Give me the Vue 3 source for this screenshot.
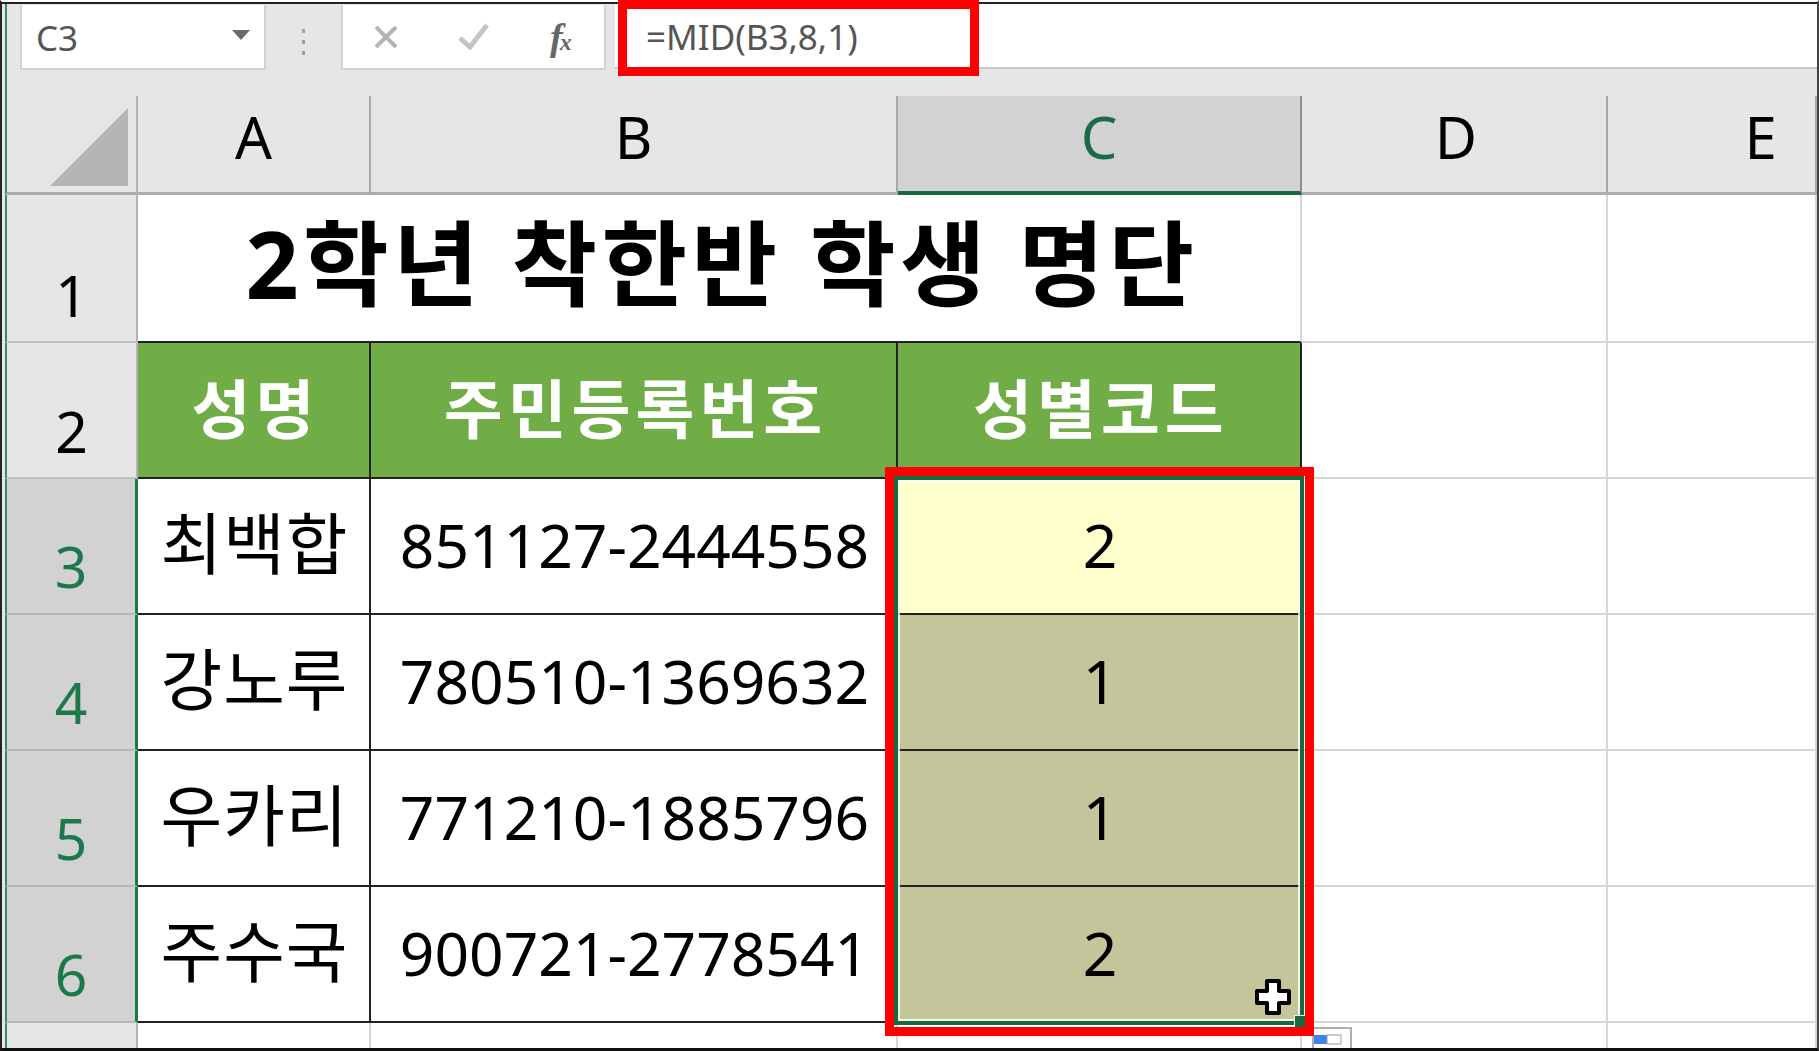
<script setup>
const columns = [
  { label: 'A' },
  { label: 'B' },
  { label: 'C', selected: true },
  { label: 'D' },
  { label: 'E' }
]
const headers = ['성명', '주민등록번호', '성별코드']
const students = [
  { row: 3, name: '최백합', id: '851127-2444558', code: '2', tone: 'active' },
  { row: 4, name: '강노루', id: '780510-1369632', code: '1', tone: 'filled' },
  { row: 5, name: '우카리', id: '771210-1885796', code: '1', tone: 'filled' },
  { row: 6, name: '주수국', id: '900721-2778541', code: '2', tone: 'filled' }
]
</script>

<template>
  <div class="page">
    <div class="top-rule"></div>
    <div class="toolbar">
      <div class="name-box">
        <span class="cell-ref">C3</span>
        <span class="caret"></span>
      </div>
      <div class="dots"><i></i><i></i><i></i></div>
      <div class="fx-box">
        <svg class="fx-icon x" viewBox="0 0 26 22" aria-hidden="true">
          <path d="M3 1 L23 21 M23 1 L3 21" />
        </svg>
        <svg class="fx-icon check" viewBox="0 0 32 27" aria-hidden="true">
          <path d="M2 15 L12 24 L29 2" />
        </svg>
        <span class="fx"><em>f</em><b>x</b></span>
      </div>
      <div class="formula">=MID(B3,8,1)</div>
    </div>

    <div class="sheet">
      <div class="corner"><span class="triangle"></span></div>
      <div
        v-for="col in columns"
        :key="col.label"
        class="col-head"
        :class="['col-' + col.label, { selected: col.selected }]"
      >{{ col.label }}</div>

      <div class="row-head">1</div>
      <div class="title">2학년 착한반 학생 명단</div>
      <div class="blank"></div>
      <div class="blank"></div>

      <div class="row-head">2</div>
      <div
        v-for="h in headers"
        :key="h"
        class="head-cell"
      >{{ h }}</div>
      <div class="blank"></div>
      <div class="blank"></div>

      <template v-for="s in students" :key="s.row">
        <div class="row-head selected">{{ s.row }}</div>
        <div class="data kr">{{ s.name }}</div>
        <div class="data">{{ s.id }}</div>
        <div class="data code" :class="s.tone">{{ s.code }}</div>
        <div class="blank"></div>
        <div class="blank"></div>
      </template>

      <div class="row-head last"></div>
      <div class="tail"></div>
      <div class="tail"></div>
      <div class="tail"></div>
      <div class="tail"></div>
      <div class="tail"></div>
    </div>

    <div class="selection"></div>
    <div class="handle"></div>
    <svg class="cursor" viewBox="0 0 38 38" aria-hidden="true">
      <path d="M13 3 H25 V13 H35 V25 H25 V35 H13 V25 H3 V13 H13 Z" />
    </svg>
    <svg class="paste" viewBox="0 0 40 21" aria-hidden="true">
      <rect class="paste-frame" x="1" y="1" width="38" height="30" />
      <rect class="paste-blue" x="2" y="8" width="13" height="9" />
      <rect class="paste-white" x="15" y="8" width="14" height="9" />
    </svg>
    <div class="mark mark-formula"></div>
    <div class="mark mark-range"></div>
  </div>
</template>

<style>
html, body { margin: 0; background: #fff; }
</style>

<style scoped>
.page {
  position: relative;
  box-sizing: border-box;
  width: 1819px;
  height: 1051px;
  padding-left: 3px;
  border-top: 2px solid #fff;
  border-left: 2px solid #222;
  border-right: 2px solid #444;
  border-bottom: 3px solid #111;
  background: #e6e6e6;
  font-family: "Noto Sans", "Noto Sans CJK KR", sans-serif;
  color: #000;
}
.top-rule {
  height: 2px;
  margin-left: -3px;
  background: #222;
}
.toolbar {
  box-sizing: border-box;
  display: flex;
  align-items: flex-start;
  height: 92px;
  padding: 1px 0 0 13px;
  border-left: 2px solid #3b8a5d;
}
.name-box {
  box-sizing: border-box;
  display: flex;
  align-items: center;
  justify-content: space-between;
  width: 246px;
  height: 65px;
  padding: 2px 14px 0 14px;
  background: #fff;
  border: 2px solid #d2d2d2;
  border-top: 0;
}
.cell-ref, .formula {
  font-size: 35px;
  line-height: 1;
  color: #555;
}
.caret {
  width: 0;
  height: 0;
  border-left: 9px solid transparent;
  border-right: 9px solid transparent;
  border-top: 10px solid #6a6a6a;
  margin-bottom: 6px;
}
.dots {
  display: flex;
  flex-direction: column;
  gap: 7px;
  width: 75px;
  height: 65px;
  padding: 24px 0 0 36px;
  box-sizing: border-box;
}
.dots i {
  width: 3px;
  height: 4px;
  background: #a0a0a0;
}
.fx-box {
  box-sizing: border-box;
  position: relative;
  display: flex;
  align-items: center;
  width: 265px;
  height: 65px;
  padding-left: 30px;
  background: #fff;
  border: 2px solid #d2d2d2;
  border-top: 0;
}
.fx-icon {
  fill: none;
  stroke: #b4b4b4;
  stroke-width: 4;
}
.fx-icon.x { width: 26px; height: 22px; margin-right: 59px; }
.fx-icon.check { width: 32px; height: 27px; margin-right: 60px; stroke: #c4c4c4; stroke-width: 5; }
.fx {
  font-family: "Liberation Serif", serif;
  font-size: 38px;
  line-height: 1;
  color: #666;
  white-space: nowrap;
}
.fx em { font-weight: 700; }
.fx b { font-size: 24px; font-style: italic; margin-left: -3px; }
.formula {
  box-sizing: border-box;
  flex: 1;
  height: 65px;
  margin: -1px 0 0 9px;
  padding: 15px 0 0 31px;
  background: #fff;
  border-bottom: 2px solid #c8c8c8;
}
.sheet {
  box-sizing: border-box;
  display: grid;
  grid-template-columns: 133px 233px 527px 404px 306px 1fr;
  grid-template-rows: 99px 148px 136px 136px 136px 136px 136px 1fr;
  height: 952px;
  background: #e6e6e6;
}
.corner {
  box-sizing: border-box;
  border-left: 2px solid #3b8a5d;
  border-right: 2px solid #b4b4b4;
  border-bottom: 3px solid #adadad;
  position: relative;
}
.triangle {
  position: absolute;
  right: 8px;
  bottom: 6px;
  width: 78px;
  height: 78px;
  background: #b5b5b5;
  clip-path: polygon(100% 0, 100% 100%, 0 100%);
}
.col-head {
  box-sizing: border-box;
  display: flex;
  align-items: center;
  justify-content: center;
  font-size: 58px;
  line-height: 1;
  padding-bottom: 14px;
  border-right: 2px solid #a8a8a8;
  border-bottom: 3px solid #adadad;
}
.col-D { padding-left: 4px; }
.col-E { padding-left: 98px; }
.col-head.selected {
  background: #d2d2d2;
  color: #1d6b45;
  border-right-color: #8f8f8f;
  border-bottom: 4px solid #17693f;
}
.row-head {
  box-sizing: border-box;
  display: flex;
  align-items: flex-end;
  justify-content: center;
  padding-bottom: 13px;
  font-size: 57px;
  line-height: 1.12;
  border-left: 2px solid #3b8a5d;
  border-right: 2px solid #b4b4b4;
  border-bottom: 2px solid #c0c0c0;
  background: #e6e6e6;
}
.row-head.selected {
  padding-bottom: 14px;
  background: #d2d2d2;
  color: #1c7a4a;
  border-right: 3px solid #177a47;
  border-bottom-color: #b6b6b6;
}
.row-head.last { padding: 0; border-bottom: 0; }
.blank, .tail {
  box-sizing: border-box;
  background: #fff;
  border-right: 2px solid #d6d6d6;
  border-bottom: 2px solid #d6d6d6;
}
.tail { border-bottom: 0; }
.title {
  grid-column: span 3;
  box-sizing: border-box;
  display: flex;
  align-items: center;
  justify-content: center;
  padding: 0 0 10px 6px;
  font-size: 93px;
  font-weight: 700;
  line-height: 1;
  letter-spacing: 4.4px;
  background: #fff;
  border-right: 2px solid #d6d6d6;
  border-bottom: 2px solid #222;
  white-space: pre;
}
.head-cell {
  box-sizing: border-box;
  display: flex;
  align-items: center;
  justify-content: center;
  padding: 0 0 10px 4px;
  font-size: 64px;
  font-weight: 700;
  letter-spacing: 5px;
  color: #fff;
  background: #70ad47;
  border-right: 2px solid #222;
  border-bottom: 2px solid #222;
}
.data {
  box-sizing: border-box;
  display: flex;
  align-items: center;
  justify-content: center;
  padding: 0 0 2px 2px;
  font-size: 60.5px;
  line-height: 1;
  background: #fff;
  border-right: 2px solid #222;
  border-bottom: 2px solid #222;
  white-space: nowrap;
}
.data.kr { padding: 0 0 5px 2px; font-size: 67px; letter-spacing: 1px; }
.code.active { background: #ffffcc; }
.code.filled { background: #c5c59c; }
.selection {
  position: absolute;
  left: 892px;
  top: 474px;
  width: 410px;
  height: 549px;
  box-sizing: border-box;
  border: 4px solid #17693f;
  box-shadow: inset 0 0 0 2px rgba(255, 255, 255, .8);
}
.handle {
  position: absolute;
  left: 1292px;
  top: 1013px;
  width: 11px;
  height: 11px;
  background: #17693f;
  border: 1px solid #f2f0e0;
}
.cursor {
  position: absolute;
  left: 1252px;
  top: 976px;
  width: 38px;
  height: 38px;
  fill: #fff;
  stroke: #000;
  stroke-width: 4;
  stroke-linejoin: round;
}
.paste {
  position: absolute;
  left: 1310px;
  top: 1025px;
  width: 40px;
  height: 21px;
}
.paste-frame { fill: #fff; stroke: #b0b0b0; stroke-width: 2; }
.paste-blue { fill: #3f83f0; }
.paste-white { fill: #fff; stroke: #9a9a9a; }
.mark {
  position: absolute;
  box-sizing: border-box;
  border: 9px solid #ff0000;
  pointer-events: none;
}
.mark-formula { left: 616px; top: -2px; width: 361px; height: 76px; }
.mark-range { left: 883px; top: 465px; width: 429px; height: 569px; }
</style>
